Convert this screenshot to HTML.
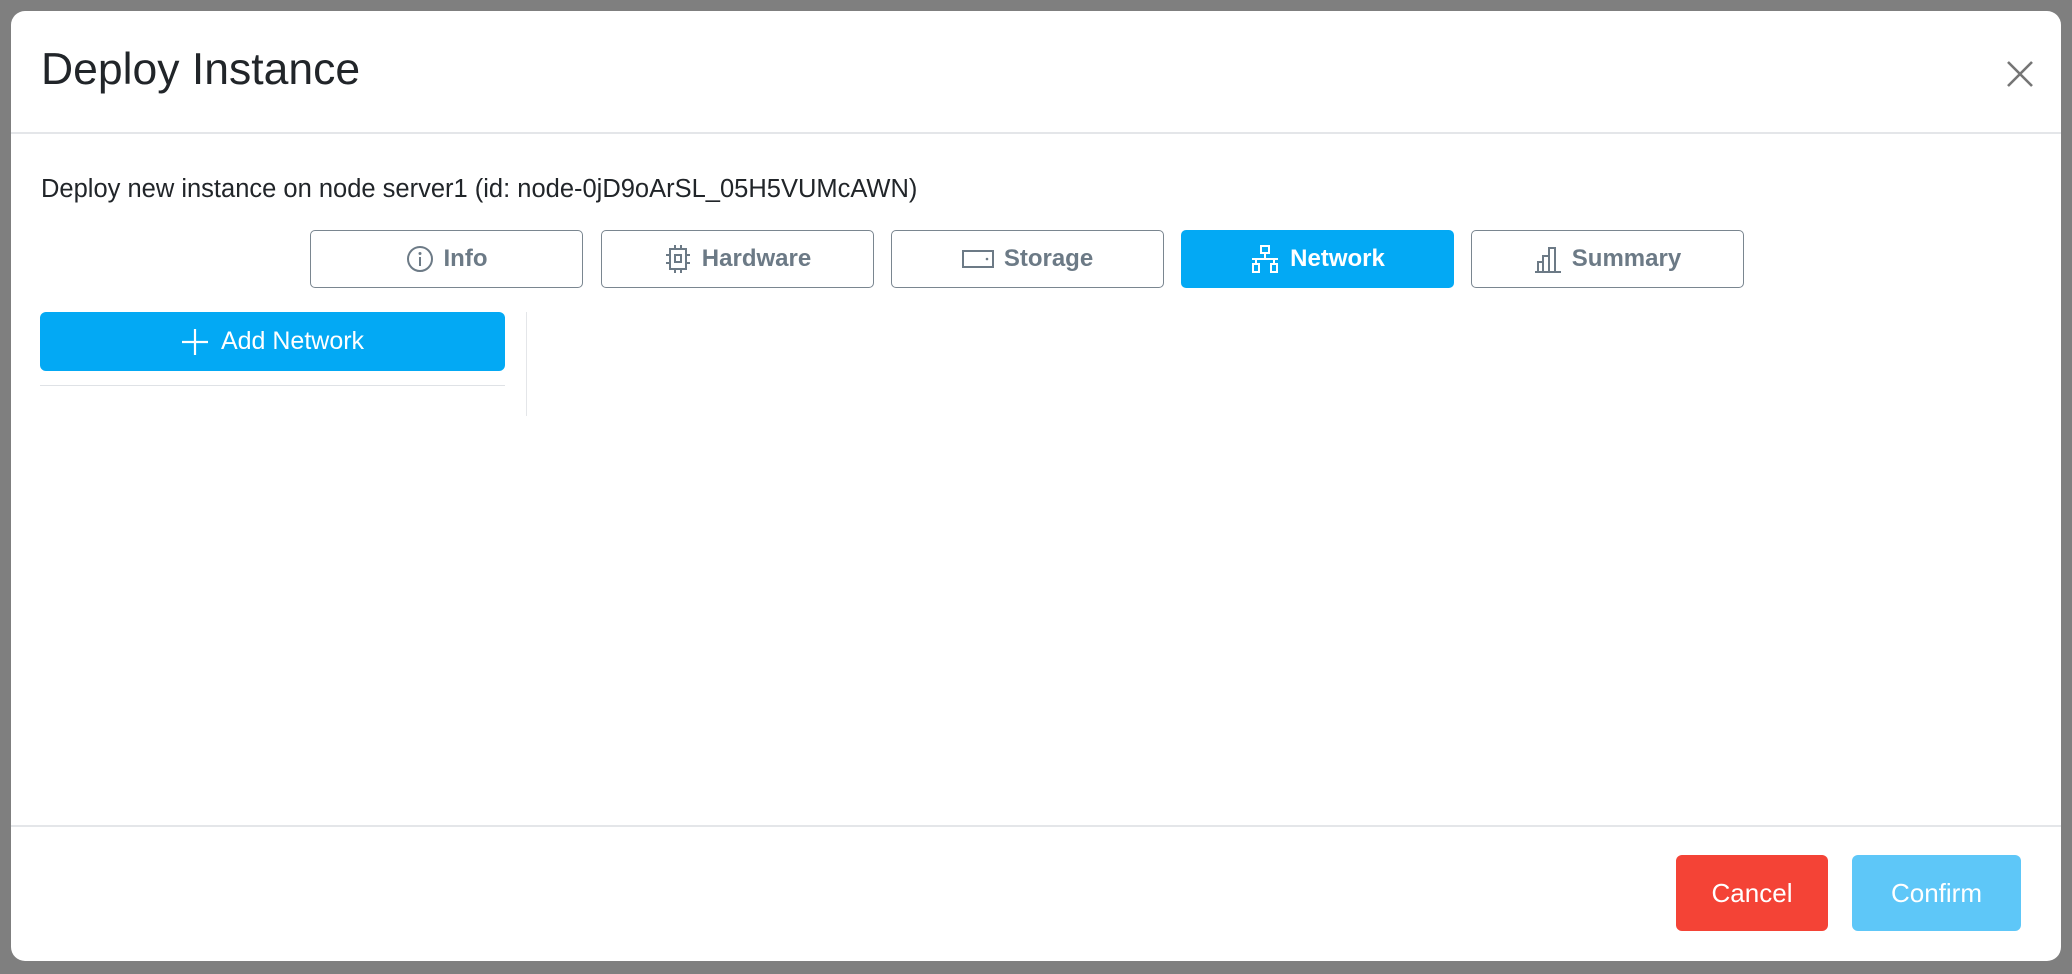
<!DOCTYPE html>
<html><head><style>
*{box-sizing:border-box;margin:0;padding:0}
body{width:2072px;height:974px;background:#7f7f7f;font-family:"Liberation Sans",sans-serif;position:relative;overflow:hidden}
.modal{position:absolute;left:11px;top:11px;width:2050px;height:950px;background:#fff;border-radius:14px}
.abs{position:absolute}
.title{left:30px;top:34px;font-size:44.5px;color:#212529}
.hr{height:2px;background:#e4e6e9}
.sub{left:30px;top:164px;font-size:25.5px;color:#212529}
.tab{position:absolute;top:219px;width:273px;height:58px;border:1.5px solid #7a8690;border-radius:5px;display:flex;align-items:center;justify-content:center;font-size:24px;font-weight:bold;color:#6c7a86;gap:10px}
.tab.act{background:#03a9f4;border-color:#03a9f4;color:#fff}
.btn{position:absolute;border-radius:6px;color:#fff;font-size:26px;display:flex;align-items:center;justify-content:center}
</style></head><body>
<div class="modal">
<div class="abs title">Deploy Instance</div>
<svg class="abs" style="left:1995px;top:49px" width="28" height="28" viewBox="0 0 28 28"><path d="M2 2L26 26M26 2L2 26" stroke="#757575" stroke-width="2.6"/></svg>
<div class="abs hr" style="left:0;top:121px;width:2050px"></div>
<div class="abs sub">Deploy new instance on node server1 (id: node-0jD9oArSL_05H5VUMcAWN)</div>

<div class="tab" style="left:299px"><svg width="28" height="28" viewBox="0 0 28 28"><circle cx="14" cy="14" r="12" fill="none" stroke="#6c7a86" stroke-width="2"/><circle cx="14" cy="8.5" r="1.5" fill="#6c7a86"/><path d="M14 12v9" stroke="#6c7a86" stroke-width="2"/></svg>Info</div>
<div class="tab" style="left:590px"><svg width="28" height="30" viewBox="0 0 28 30"><rect x="6" y="5" width="16" height="20" fill="none" stroke="#6c7a86" stroke-width="2"/><rect x="11" y="11" width="6" height="7" fill="none" stroke="#6c7a86" stroke-width="2"/><path d="M11 1v4M17 1v4M11 25v4M17 25v4M2 11h4M2 19h4M22 11h4M22 19h4" stroke="#6c7a86" stroke-width="2"/></svg>Hardware</div>
<div class="tab" style="left:880px"><svg width="32" height="20" viewBox="0 0 32 20"><rect x="1" y="2" width="30" height="16" fill="none" stroke="#6c7a86" stroke-width="2"/><circle cx="25" cy="10" r="1.3" fill="#6c7a86"/></svg>Storage</div>
<div class="tab act" style="left:1170px"><svg width="30" height="30" viewBox="0 0 30 30"><rect x="11" y="2" width="8" height="7" fill="none" stroke="#fff" stroke-width="2"/><path d="M15 9v5M2 15h26M6 15v5M24 15v5" stroke="#fff" stroke-width="2"/><rect x="3" y="20" width="6" height="8" fill="none" stroke="#fff" stroke-width="2"/><rect x="21" y="20" width="6" height="8" fill="none" stroke="#fff" stroke-width="2"/></svg>Network</div>
<div class="tab" style="left:1460px"><svg width="28" height="28" viewBox="0 0 28 28"><path d="M1 27h26M4 26V17h5v9M9 26V11h6v15M15 26V3h6v23" fill="none" stroke="#6c7a86" stroke-width="2"/></svg>Summary</div>

<div class="btn" style="left:29px;top:301px;width:465px;height:59px;background:#03a9f4;gap:12px;font-size:25px"><svg width="28" height="28" viewBox="0 0 28 28"><path d="M14 1v26M1 14h26" stroke="#fff" stroke-width="2.2"/></svg>Add Network</div>
<div class="abs hr" style="left:29px;top:374px;width:465px;height:1px;background:#dfe2e6"></div>
<div class="abs" style="left:515px;top:301px;width:1px;height:104px;background:#e4e6e9"></div>

<div class="abs hr" style="left:0;top:814px;width:2050px"></div>
<div class="btn" style="left:1665px;top:844px;width:152px;height:76px;background:#f44336">Cancel</div>
<div class="btn" style="left:1841px;top:844px;width:169px;height:76px;background:#5ec7f8">Confirm</div>
</div>
</body></html>
